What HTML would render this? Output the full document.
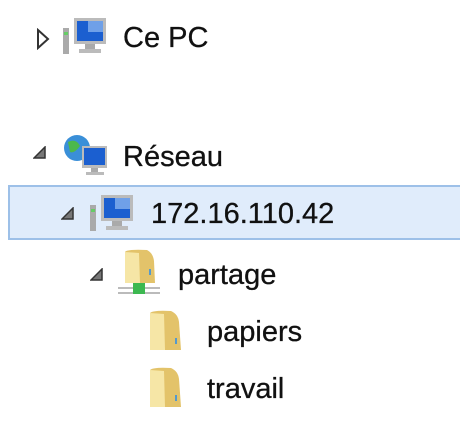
<!DOCTYPE html>
<html><head><style>
body{margin:0;width:460px;height:432px;background:#fff;position:relative;overflow:hidden;font-family:"Liberation Sans",sans-serif;color:#111;}
.t{position:absolute;font-size:29px;line-height:1;white-space:nowrap;-webkit-text-stroke:0.3px #111}
.i{position:absolute}
.sel{position:absolute;left:8px;top:185px;width:460px;height:55px;background:#e0ecfb;border:2px solid #9dc0e8;box-sizing:border-box}
</style></head><body>
<div class="sel"></div>
<svg class="i" style="left:36px;top:28px" width="14" height="22"><path d="M2 2 L12 11 L2 20 Z" fill="none" stroke="#333" stroke-width="2"/></svg>
<svg class="i" style="left:62px;top:16px" width="46" height="40"><rect x="1" y="12" width="6" height="26" fill="#aaa"/><rect x="2" y="16" width="4" height="3" fill="#6c6"/><rect x="12" y="2" width="32" height="26" fill="#bbb"/><rect x="15" y="5" width="26" height="20" fill="#1b5fd0"/><rect x="26" y="5" width="15" height="11" fill="#6fa0e8"/><rect x="23" y="28" width="10" height="5" fill="#aaa"/><rect x="17" y="33" width="22" height="4" fill="#bbb"/></svg>
<div class="t" style="left:123px;top:24px">Ce PC</div>
<svg class="i" style="left:33px;top:146px" width="14" height="14"><path d="M12 1 L12 12 L1 12 Z" fill="#777" stroke="#333" stroke-width="1.5"/></svg>
<svg class="i" style="left:62px;top:134px" width="46" height="42"><circle cx="15" cy="14" r="13" fill="#3a8fd8"/><path d="M6 8 Q14 4 18 12 Q12 20 8 18 Z" fill="#4cb84c"/><rect x="20" y="12" width="25" height="22" fill="#bbb"/><rect x="22" y="14" width="21" height="17" fill="#1b5fd0"/><rect x="29" y="34" width="7" height="4" fill="#aaa"/><rect x="24" y="38" width="18" height="3" fill="#bbb"/></svg>
<div class="t" style="left:123px;top:143px">Réseau</div>
<svg class="i" style="left:61px;top:207px" width="14" height="14"><path d="M12 1 L12 12 L1 12 Z" fill="#777" stroke="#333" stroke-width="1.5"/></svg>
<svg class="i" style="left:89px;top:193px" width="46" height="40"><rect x="1" y="12" width="6" height="26" fill="#aaa"/><rect x="2" y="16" width="4" height="3" fill="#6c6"/><rect x="12" y="2" width="32" height="26" fill="#bbb"/><rect x="15" y="5" width="26" height="20" fill="#1b5fd0"/><rect x="26" y="5" width="15" height="11" fill="#6fa0e8"/><rect x="23" y="28" width="10" height="5" fill="#aaa"/><rect x="17" y="33" width="22" height="4" fill="#bbb"/></svg>
<div class="t" style="left:151px;top:200px">172.16.110.42</div>
<svg class="i" style="left:90px;top:268px" width="14" height="14"><path d="M12 1 L12 12 L1 12 Z" fill="#777" stroke="#333" stroke-width="1.5"/></svg>
<svg class="i" style="left:117px;top:249px" width="46" height="48"><path d="M8 3 Q10 0 30 1 Q36 4 37 12 L38 34 L8 34 Z" fill="#e3c36a"/><path d="M8 3 L22 4 L23 34 L8 34 Z" fill="#f6e6a6"/><rect x="32" y="20" width="2" height="6" fill="#59c"/><rect x="1" y="38" width="42" height="2" fill="#bbb"/><rect x="1" y="43" width="42" height="2" fill="#bbb"/><rect x="16" y="34" width="12" height="11" fill="#3cb850"/></svg>
<div class="t" style="left:178px;top:261px">partage</div>
<svg class="i" style="left:147px;top:310px" width="42" height="44"><path d="M3 3 Q6 0 24 1 Q31 4 32 12 L34 40 L3 40 Z" fill="#e3c36a"/><path d="M3 3 L17 4 L18 40 L3 40 Z" fill="#f6e6a6"/><rect x="28" y="28" width="2" height="6" fill="#59c"/></svg>
<div class="t" style="left:207px;top:318px">papiers</div>
<svg class="i" style="left:147px;top:367px" width="42" height="44"><path d="M3 3 Q6 0 24 1 Q31 4 32 12 L34 40 L3 40 Z" fill="#e3c36a"/><path d="M3 3 L17 4 L18 40 L3 40 Z" fill="#f6e6a6"/><rect x="28" y="28" width="2" height="6" fill="#59c"/></svg>
<div class="t" style="left:207px;top:375px">travail</div>
</body></html>
